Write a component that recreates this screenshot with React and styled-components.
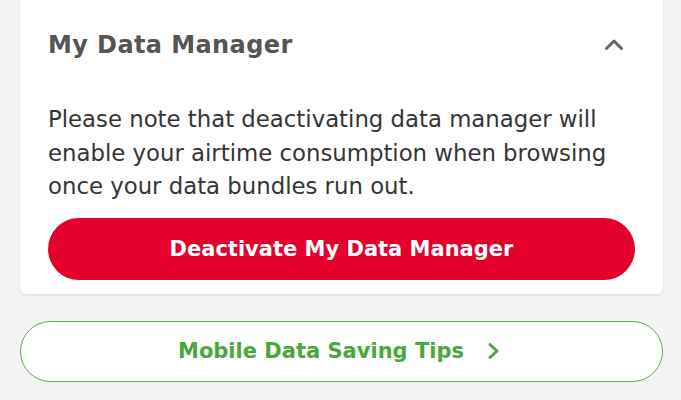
import React from 'react';
import styled, { createGlobalStyle } from 'styled-components';

const GlobalStyle = createGlobalStyle`
  body {
    margin: 0;
    background-color: #f4f4f4;
    font-family: "DejaVu Sans", "Open Sans", sans-serif;
  }
`;

const Page = styled.div`
  padding: 0 18px 0 20px;
  display: flex;
  flex-direction: column;
  gap: 27px;
`;

const Card = styled.section`
  margin-top: -10px;
  background-color: #ffffff;
  border-radius: 6px;
  box-shadow: 0 1px 3px rgba(0, 0, 0, 0.12);
  padding: 40px 28px 14px;
`;

const Header = styled.div`
  display: flex;
  align-items: center;
  justify-content: space-between;
  height: 30px;
  margin-bottom: 43px;
`;

const Title = styled.h2`
  margin: 0;
  font-size: 24px;
  font-weight: 700;
  letter-spacing: 0.4px;
  color: #555555;
`;

const Chevron = styled.svg`
  width: 24px;
  height: 24px;
  margin-right: 9px;
  color: #666666;
`;

const Note = styled.p`
  margin: 0 0 14px;
  font-size: 22.8px;
  line-height: 33.5px;
  color: #353535;
`;

const PillButton = styled.button`
  width: 100%;
  height: ${(p) => p.$height}px;
  border-radius: 999px;
  display: flex;
  align-items: center;
  justify-content: center;
  gap: 17px;
  font-family: inherit;
  font-size: 21px;
  font-weight: 600;
  cursor: pointer;

  &.primary {
    background-color: #e4002b;
    color: #ffffff;
    border: none;
  }

  &.outline {
    background-color: #ffffff;
    color: #4aa63e;
    border: 1.5px solid #5aae4c;
  }
`;

export default function App() {
  return (
    <>
      <GlobalStyle />
      <Page>
        <Card>
          <Header>
            <Title>My Data Manager</Title>
            <Chevron viewBox="0 0 24 24" fill="none" stroke="currentColor" strokeWidth="3" strokeLinecap="round" strokeLinejoin="round">
              <path d="M4.5 15.5l7.5-7.5 7.5 7.5" />
            </Chevron>
          </Header>
          <Note>
            Please note that deactivating data manager will enable your airtime
            consumption when browsing once your data bundles run out.
          </Note>
          <PillButton className="primary" $height={62}>
            Deactivate My Data Manager
          </PillButton>
        </Card>
        <PillButton className="outline" $height={61}>
          <span>Mobile Data Saving Tips</span>
          <svg width="24" height="24" viewBox="0 0 24 24" fill="none" stroke="currentColor" strokeWidth="3" strokeLinecap="round" strokeLinejoin="round">
            <path d="M9 5.5l7 6.5-7 6.5" />
          </svg>
        </PillButton>
      </Page>
    </>
  );
}
